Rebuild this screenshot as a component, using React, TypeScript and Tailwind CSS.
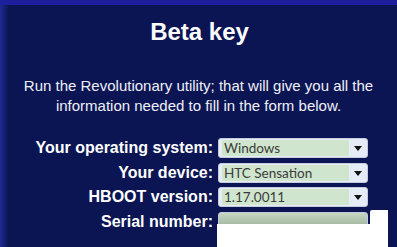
const rows = [
	{ label: 'Your operating system:', value: 'Windows' },
	{ label: 'Your device:', value: 'HTC Sensation' },
	{ label: 'HBOOT version:', value: '1.17.0011' }
];

const Arrow = () => (
	<svg width="8" height="5" viewBox="0 0 8 5" className="block">
		<path d="M0 0 L8 0 L4 5 Z" fill="#111" />
	</svg>
);

const FakeSelect = ({ value }: { readonly value: string }) => (
	<div className="flex h-[20px] w-[150px] items-center rounded-[3px] border border-[#c3cbdc] bg-[#e6ecf7] pl-[3px] pr-[4px]">
		<div className="flex h-[16px] w-[127px] items-center bg-[#cfe5cd] pl-[2px] font-['Lato',sans-serif] text-[13.5px] leading-[16px] text-[#3c3c3c]">
			{value}
		</div>
		<div className="flex flex-1 justify-end pr-[1px] pt-[1px]">
			<Arrow />
		</div>
	</div>
);

export default function App() {
	return (
		<div className="relative h-[247px] w-[397px] overflow-hidden border-t-[5px] border-[#1d1f9c] bg-[#0b1553] font-['Liberation_Sans',Arial,sans-serif] text-white">
			<div className="absolute inset-y-0 left-0 w-[9px] bg-gradient-to-r from-[#1d2b92] to-transparent" />
			<div className="relative flex flex-col items-center pt-[13px]">
				<h1 className="pl-[2px] text-[24px] font-bold leading-[28px]">Beta key</h1>
				<p className="mt-[30px] text-center text-[15px] leading-[20px] text-[#eef0f8]">
					Run the Revolutionary utility; that will give you all the
					<br />
					information needed to fill in the form below.
				</p>
			</div>
			<div className="relative mt-[22px] grid grid-cols-[213px_150px] gap-x-[5px] gap-y-[4.5px]">
				{rows.map(row => (
					<div key={row.label} className="contents">
						<div className="text-right text-[16px] font-bold leading-[20px]">{row.label}</div>
						<FakeSelect value={row.value} />
					</div>
				))}
				<div className="text-right text-[16px] font-bold leading-[20px]">Serial number:</div>
				<div className="h-[20px] w-[150px] rounded-[3px] border border-[#c3cbdc] bg-gradient-to-b from-[#c6d8c4] to-[#93a891]" />
			</div>
			<div className="absolute left-[217px] top-[219px] h-[30px] w-[171px] bg-white" />
			<div className="absolute left-[370px] top-[205px] h-[20px] w-[18px] rounded-tl-[2px] bg-white" />
		</div>
	);
}
